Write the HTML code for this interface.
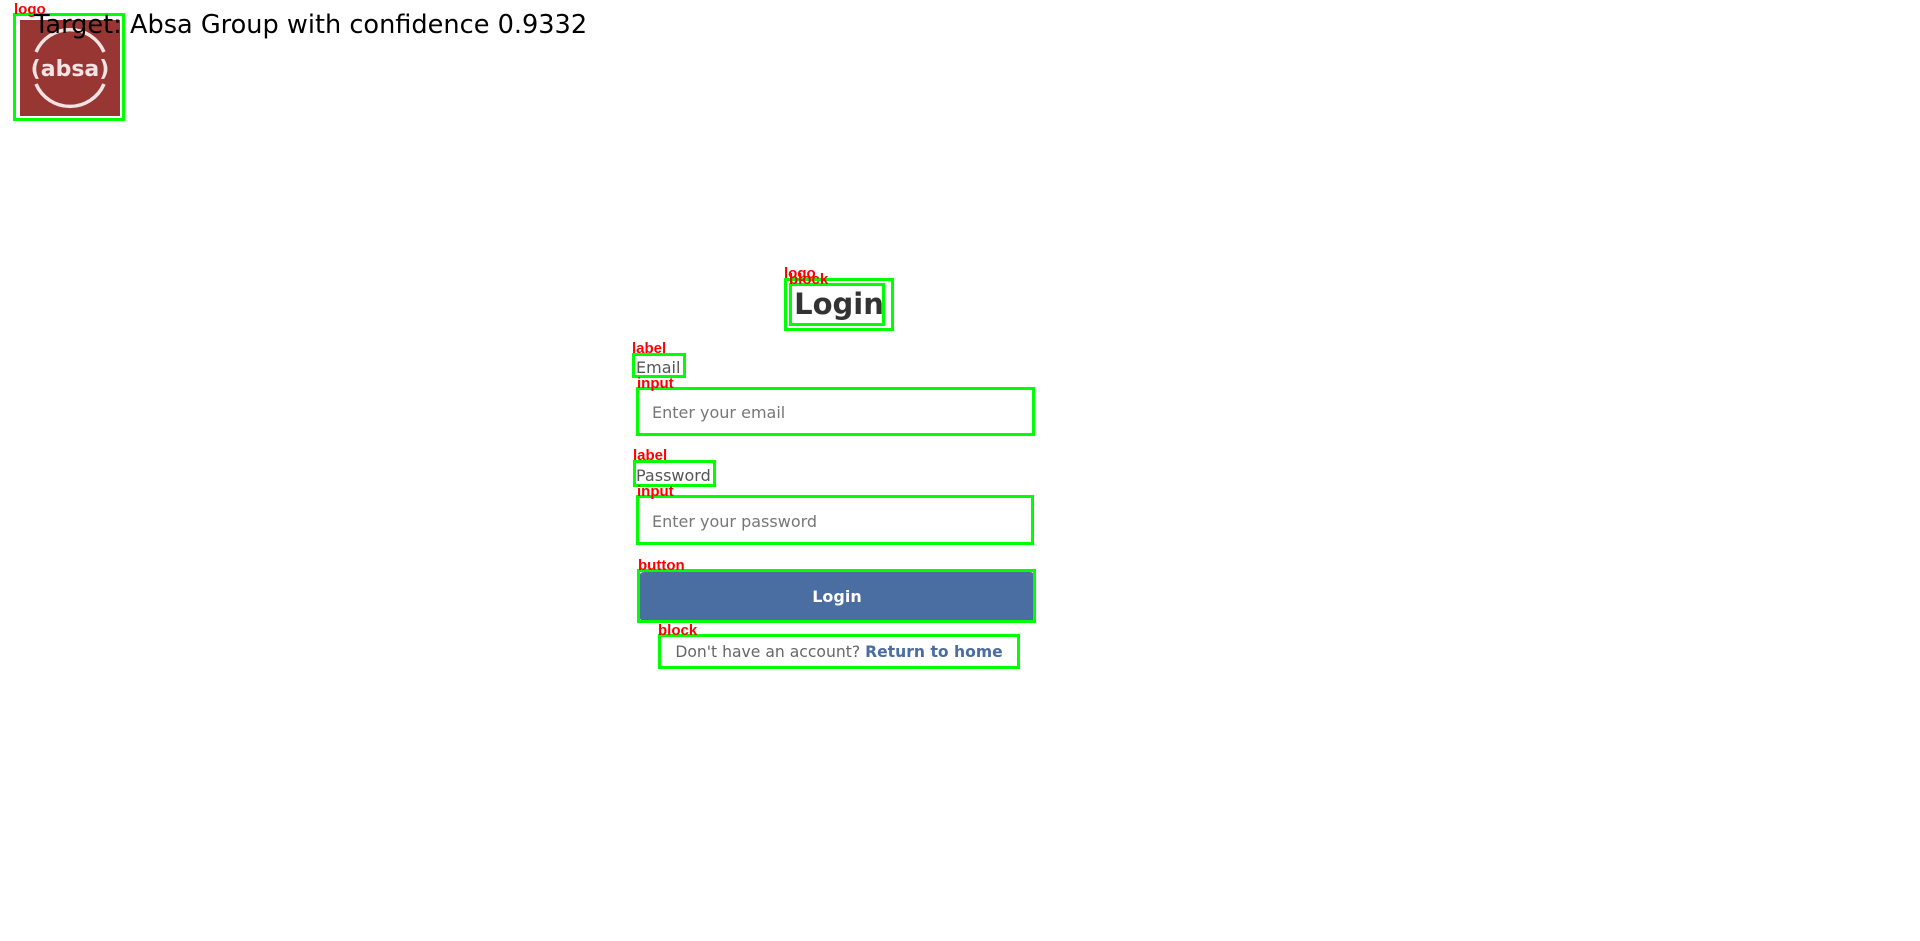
<!DOCTYPE html>
<html><head><meta charset="utf-8"><style>
body{margin:0;width:1920px;height:941px;background:#fff;position:relative;overflow:hidden;font-family:"DejaVu Sans","Liberation Sans",sans-serif;}
.a{position:absolute;box-sizing:border-box}
.g{border:3px solid #00ff00}
.r{position:absolute;color:#ff0000;font:bold 15px "Liberation Sans",sans-serif;line-height:15px}
.inp{border:1px solid #ccc;border-radius:3px}
</style></head><body>
<div class="a" style="left:20px;top:20px;width:100px;height:96px;background:#983634"></div>
<svg class="a" style="left:20px;top:20px" width="100" height="96" viewBox="0 0 100 96">
<path d="M16 32 A37 37 0 0 1 84 32" fill="none" stroke="#f3e3e3" stroke-width="3.5"/>
<path d="M16 64 A37 37 0 0 0 84 64" fill="none" stroke="#f3e3e3" stroke-width="3.5"/>
<text x="50" y="56" text-anchor="middle" fill="#f3e3e3" font-family="DejaVu Sans,sans-serif" font-weight="bold" font-size="22">(absa)</text>
</svg>
<div class="a g" style="left:13px;top:13px;width:112px;height:108px"></div>
<div class="r" style="left:14px;top:2px">logo</div>
<div class="a" style="left:34px;top:10px;font:25.6px 'DejaVu Sans',sans-serif;color:#000;white-space:nowrap">Target: Absa Group with confidence 0.9332</div>

<div class="a" style="left:784px;top:283px;width:110px;height:43px;text-align:center;font-weight:bold;font-size:29px;color:#333;line-height:43px">Login</div>
<div class="a g" style="left:784px;top:278px;width:110px;height:53px"></div>
<div class="a g" style="left:789px;top:283px;width:96px;height:43px"></div>
<div class="r" style="left:784px;top:266px">logo</div><div class="r" style="left:789px;top:272px">block</div>

<div class="a" style="left:636px;top:358px;font-size:16px;color:#555">Email</div>
<div class="a g" style="left:632px;top:353px;width:54px;height:25px"></div>
<div class="r" style="left:632px;top:341px">label</div>
<div class="a inp" style="left:637px;top:388px;width:397px;height:47px"></div>
<div class="a" style="left:652px;top:403px;font-size:16px;color:#777">Enter your email</div>
<div class="a g" style="left:636px;top:387px;width:399px;height:49px"></div>
<div class="r" style="left:637px;top:376px">input</div>

<div class="a" style="left:636px;top:466px;font-size:16px;color:#555">Password</div>
<div class="a g" style="left:633px;top:460px;width:83px;height:27px"></div>
<div class="r" style="left:633px;top:448px">label</div>
<div class="a inp" style="left:637px;top:496px;width:396px;height:48px"></div>
<div class="a" style="left:652px;top:512px;font-size:16px;color:#777">Enter your password</div>
<div class="a g" style="left:636px;top:495px;width:398px;height:50px"></div>
<div class="r" style="left:637px;top:484px">input</div>

<div class="a" style="left:639px;top:572px;width:396px;height:49px;background:#4a6da2;border-radius:5px;color:#fff;font-weight:bold;font-size:16px;text-align:center;line-height:49px">Login</div>
<div class="a g" style="left:637px;top:569px;width:399px;height:54px"></div>
<div class="r" style="left:638px;top:558px">button</div>

<div class="a" style="left:658px;top:635px;width:362px;height:35px;text-align:center;line-height:35px;font-size:15.6px;color:#666;white-space:nowrap">Don't have an account? <b style="color:#4a6da2">Return to home</b></div>
<div class="a g" style="left:658px;top:634px;width:362px;height:35px"></div>
<div class="r" style="left:658px;top:623px">block</div>
</body></html>
